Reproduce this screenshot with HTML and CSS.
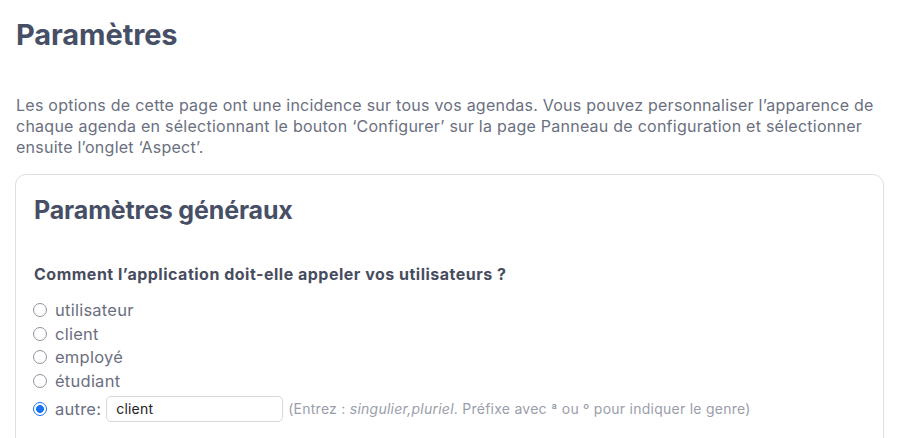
FILE: index.html
```html
<!DOCTYPE html>
<html lang="fr">
<head>
<meta charset="utf-8">
<title>Paramètres</title>
<link rel="stylesheet" href="styles.css">
</head>
<body>
<main class="page">
  <h1 class="title">Paramètres</h1>
  <p class="intro">Les options de cette page ont une incidence sur tous vos agendas. Vous pouvez personnaliser l’apparence de chaque agenda en sélectionnant le bouton ‘Configurer’ sur la page Panneau de configuration et sélectionner ensuite l’onglet ‘Aspect’.</p>
  <section class="card">
    <h2 class="card-title">Paramètres généraux</h2>
    <h3 class="question">Comment l’application doit-elle appeler vos utilisateurs ?</h3>
    <div class="options">
      <label class="option"><input type="radio" name="who" class="radio"><span>utilisateur</span></label>
      <label class="option"><input type="radio" name="who" class="radio"><span>client</span></label>
      <label class="option"><input type="radio" name="who" class="radio"><span>employé</span></label>
      <label class="option"><input type="radio" name="who" class="radio"><span>étudiant</span></label>
      <div class="option option-other">
        <input type="radio" name="who" class="radio" checked>
        <span>autre:</span>
        <input type="text" class="text-input" value="client">
        <span class="hint">(Entrez : <em>singulier,pluriel</em>. Préfixe avec ª ou º pour indiquer le genre)</span>
      </div>
    </div>
  </section>
</main>
</body>
</html>
```
FILE: styles.css
```css
* { box-sizing: border-box; }
html, body { margin: 0; padding: 0; background: #fff; }
body {
  font-family: Inter, "Noto Sans", "Liberation Sans", sans-serif;
  color: #6b7080;
}
.page {
  padding: 16px 16px 0 16px;
}
.title {
  margin: 0;
  padding-top: 1px;
  font-size: 29px;
  font-weight: 700;
  line-height: 36px;
  color: #474f66;
  letter-spacing: -0.1px;
}
.intro {
  margin: 42px -8px 0 0;
  font-size: 16px;
  line-height: 21px;
  color: #6b7080;
  letter-spacing: 0.25px;
}
.card {
  margin-top: 16px;
  margin-left: -1px;
  border: 1px solid #dedfe2;
  border-radius: 11px;
  padding: 19px 18px 20px 18px;
  min-height: 300px;
}
.card-title {
  margin: 0;
  font-size: 25px;
  line-height: 32px;
  font-weight: 700;
  color: #474f66;
  letter-spacing: -0.15px;
}
.question {
  margin: 38px 0 0 0;
  font-size: 16px;
  line-height: 20px;
  font-weight: 700;
  color: #474d5e;
  letter-spacing: 0.5px;
}
.options {
  margin-top: 14px;
  display: flex;
  flex-direction: column;
}
.option {
  display: flex;
  align-items: center;
  gap: 8px;
  height: 23.7px;
  font-size: 16.5px;
  color: #6b7080;
  letter-spacing: 0.25px;
}
.option-other {
  height: 30px;
  margin-top: 1px;
}
.radio {
  appearance: none;
  -webkit-appearance: none;
  margin: 0 0 0 -1px;
  width: 14px;
  height: 14px;
  border: 1px solid #8f939c;
  border-radius: 50%;
  background: #fff;
  flex: none;
}
.radio:checked {
  border: 1.5px solid #1773f0;
  background: radial-gradient(circle, #1773f0 0 3.6px, #fff 4.2px);
}
.text-input {
  width: 177px;
  height: 26px;
  border: 1px solid #d6d8dc;
  border-radius: 5px;
  padding: 0 9px;
  font-family: Inter, "Noto Sans", "Liberation Sans", sans-serif;
  font-size: 14px;
  letter-spacing: 0.2px;
  color: #222;
  margin-left: -3px;
}
.hint {
  font-size: 14px;
  color: #9a9eaa;
  margin-left: -3px;
  letter-spacing: 0.25px;
}
.hint em { font-style: italic; }
```
